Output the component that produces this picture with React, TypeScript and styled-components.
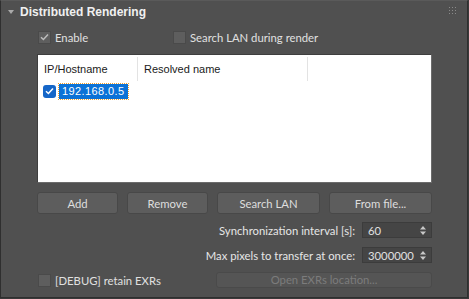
import { createGlobalStyle } from "styled-components";
import styled from "styled-components";

const GlobalStyle = createGlobalStyle`
  html, body {
    margin: 0;
    padding: 0;
    background: #3a3a3a;
  }
  body {
    font-family: Lato, "Liberation Sans", sans-serif;
    font-size: 11.3px;
    color: #dcdcdc;
  }
`;

export default function App() {
  return (
    <>
      <GlobalStyle />
      <Panel>
        <Header>
          <Triangle />
          <Title>Distributed Rendering</Title>
          <Grip>
            <svg width="7" height="7" viewBox="0 0 7 7">
              {[0, 3, 6].map((x) =>
                [0, 3, 6].map((y) => (
                  <rect key={`${x}-${y}`} x={x} y={y} width="1" height="1" fill="#8a8a8a" />
                ))
              )}
            </svg>
          </Grip>
        </Header>
        <Body>
          <CheckRow>
            <CheckLabel $width={135}>
              <Box>
                <CheckMark color="#bdbdbd" />
              </Box>
              Enable
            </CheckLabel>
            <CheckLabel>
              <Box />
              Search LAN during render
            </CheckLabel>
          </CheckRow>

          <ListBox>
            <ListHeader>
              <HeaderCell $width={100}>IP/Hostname</HeaderCell>
              <HeaderCell $width={170}>Resolved name</HeaderCell>
            </ListHeader>
            <ListRow>
              <BlueBox>
                <CheckMark color="#ffffff" />
              </BlueBox>
              <Selected>192.168.0.5</Selected>
            </ListRow>
          </ListBox>

          <ButtonRow>
            <Button $width={81}>Add</Button>
            <Button $width={81}>Remove</Button>
            <Button $width={103}>Search LAN</Button>
            <Button $width={103}>From file...</Button>
          </ButtonRow>

          <FieldRow>
            <FieldLabel>Synchronization interval [s]:</FieldLabel>
            <Spinner>
              <span>60</span>
              <Arrows />
            </Spinner>
          </FieldRow>
          <FieldRow>
            <FieldLabel>Max pixels to transfer at once:</FieldLabel>
            <Spinner>
              <span>3000000</span>
              <Arrows />
            </Spinner>
          </FieldRow>

          <BottomRow>
            <CheckLabel>
              <Box />
              [DEBUG] retain EXRs
            </CheckLabel>
            <DisabledButton>Open EXRs location...</DisabledButton>
          </BottomRow>
        </Body>
      </Panel>
    </>
  );
}

function CheckMark({ color }: { color: string }) {
  return (
    <svg width="9" height="8" viewBox="0 0 9 8">
      <path d="M1 4.2 L3.4 6.5 L8 1.5" stroke={color} strokeWidth="1.5" fill="none" />
    </svg>
  );
}

function Arrows() {
  return (
    <svg width="6" height="9" viewBox="0 0 6 9">
      <path d="M3 0 L6 3.5 L0 3.5 Z" fill="#c8c8c8" />
      <path d="M3 9 L6 5.5 L0 5.5 Z" fill="#c8c8c8" />
    </svg>
  );
}

const Panel = styled.div`
  width: 466px;
  height: 296px;
  background: #505050;
  border: 1px solid #2f2f2f;
  border-top-color: #5a5a5a;
  box-sizing: content-box;
`;

const Header = styled.div`
  display: flex;
  align-items: center;
  height: 22px;
  padding: 0 0 0 7px;
`;

const Triangle = styled.div`
  width: 0;
  height: 0;
  border-left: 3.5px solid transparent;
  border-right: 3.5px solid transparent;
  border-top: 4px solid #aaaaaa;
  margin-right: 6px;
  margin-top: -1px;
`;

const Title = styled.div`
  font-family: "Liberation Sans", sans-serif;
  font-weight: bold;
  font-size: 12px;
  color: #f0f0f0;
  flex: 1;
`;

const Grip = styled.div`
  display: flex;
  align-self: flex-start;
  padding: 6px 11px 0 0;
`;

const Body = styled.div`
  padding: 0 35px 0 36px;
  display: flex;
  flex-direction: column;
`;

const CheckRow = styled.div`
  display: flex;
  align-items: center;
  height: 14px;
  margin-top: 7px;
`;

const CheckLabel = styled.label<{ $width?: number }>`
  display: flex;
  align-items: center;
  gap: 4px;
  width: ${(p) => (p.$width ? `${p.$width}px` : "auto")};
  white-space: nowrap;
  color: #e0e0e0;
`;

const Box = styled.span`
  width: 13px;
  height: 13px;
  box-sizing: border-box;
  background: #5e5e5e;
  border: 1px solid #4a4a4a;
  display: flex;
  align-items: center;
  justify-content: center;
  margin-left: 1px;
`;

const ListBox = styled.div`
  margin-top: 10px;
  height: 129px;
  background: #ffffff;
  border: 1px solid #6c6c6c;
  border-left-color: #3e3e3e;
  border-top-color: #3e3e3e;
  box-sizing: border-box;
  font-family: "Liberation Sans", sans-serif;
  color: #1a1a1a;
`;

const ListHeader = styled.div`
  display: flex;
  height: 24px;
  padding-top: 2px;
`;

const HeaderCell = styled.div<{ $width: number }>`
  box-sizing: border-box;
  width: ${(p) => p.$width}px;
  padding-left: 6px;
  border-right: 1px solid #e3e3e3;
  display: flex;
  align-items: center;
  font-size: 11px;
`;

const ListRow = styled.div`
  display: flex;
  align-items: center;
  gap: 3px;
  padding-left: 5px;
  height: 18px;
  margin-top: 1px;
`;

const BlueBox = styled.span`
  width: 13px;
  height: 13px;
  border-radius: 3px;
  background: #1566c8;
  display: flex;
  align-items: center;
  justify-content: center;
`;

const Selected = styled.span`
  background: #0b72d7;
  color: #ffffff;
  font-size: 11px;
  padding: 0 3px 0 3px;
  height: 15px;
  line-height: 15px;
  outline: 1px dotted #f0a030;
  letter-spacing: 0.4px;
`;

const ButtonRow = styled.div`
  display: flex;
  gap: 9px;
  margin-top: 9px;
`;

const Button = styled.button<{ $width: number }>`
  width: ${(p) => p.$width}px;
  height: 22px;
  background: #5d5d5d;
  border: 1px solid #484848;
  border-radius: 3px;
  color: #dedede;
  font-family: Lato, "Liberation Sans", sans-serif;
  font-size: 11.3px;
  padding: 0;
`;

const FieldRow = styled.div`
  display: flex;
  justify-content: flex-end;
  align-items: center;
  gap: 7px;
  margin-top: 8px;
  & + & {
    margin-top: 9px;
  }
`;

const FieldLabel = styled.span`
  color: #e6e6e6;
`;

const Spinner = styled.div`
  width: 70px;
  height: 16px;
  box-sizing: border-box;
  background: #454545;
  border: 1px solid #3c3c3c;
  display: flex;
  align-items: center;
  justify-content: space-between;
  padding: 0 5px 0 5px;
  color: #e0e0e0;
`;

const BottomRow = styled.div`
  display: flex;
  align-items: center;
  justify-content: space-between;
  margin-top: 9px;
`;

const DisabledButton = styled.button`
  width: 216px;
  height: 16px;
  box-sizing: border-box;
  background: #555555;
  border: 1px solid #4a4a4a;
  border-radius: 3px;
  color: #7c7c7c;
  font-family: Lato, "Liberation Sans", sans-serif;
  font-size: 11.3px;
  padding: 0;
  line-height: 12px;
`;
